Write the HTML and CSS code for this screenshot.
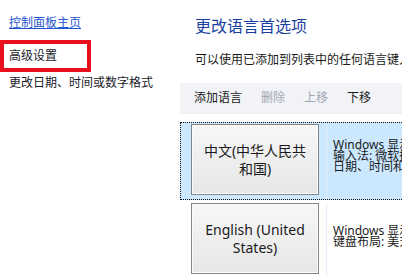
FILE: index.html
```html
<!DOCTYPE html>
<html lang="zh-CN">
<head>
<meta charset="utf-8">
<title>语言</title>
<link rel="stylesheet" href="styles.css">
</head>
<body>
<div class="page">
  <aside class="sidebar">
    <a class="home-link" href="#">控制面板主页</a>
    <div class="nav-item highlighted">高级设置</div>
    <div class="nav-item plain">更改日期、时间或数字格式</div>
  </aside>
  <main class="content">
    <h1 class="title">更改语言首选项</h1>
    <p class="subtitle">可以使用已添加到列表中的任何语言键入。列表顶部的语言为你的主要语言。</p>
    <div class="toolbar">
      <span class="tool">添加语言</span>
      <span class="tool disabled">删除</span>
      <span class="tool disabled">上移</span>
      <span class="tool">下移</span>
    </div>
    <div class="lang-list">
      <div class="lang-item selected">
        <div class="lang-btn-col"><div class="lang-btn">中文(中华人民共和国)</div></div>
        <div class="lang-desc desc-three">
          <div>Windows 显示语言: 已启用</div>
          <div>输入法: 微软拼音</div>
          <div>日期、时间和数字格式</div>
        </div>
      </div>
      <div class="lang-item">
        <div class="lang-btn-col"><div class="lang-btn">English (United States)</div></div>
        <div class="lang-desc desc-two">
          <div>Windows 显示语言: 可用</div>
          <div>键盘布局: 美式键盘</div>
        </div>
      </div>
    </div>
  </main>
</div>
</body>
</html>
```
FILE: styles.css
```css
html, body {
  margin: 0;
  padding: 0;
  background: #ffffff;
}
body {
  font-family: "Noto Sans", "Noto Sans CJK SC", sans-serif;
  color: #1a1a1a;
  width: 402px;
  height: 277px;
  overflow: hidden;
}
.page {
  display: grid;
  grid-template-columns: 180px 222px;
  height: 277px;
}
.sidebar {
  display: flex;
  flex-direction: column;
  align-items: flex-start;
  padding-top: 15px;
}
.home-link {
  margin-left: 9px;
  font-size: 12px;
  line-height: 16px;
  color: #1f55d0;
  text-decoration: underline;
}
.nav-item {
  font-size: 12px;
  line-height: 16px;
  color: #1a1a2a;
  white-space: nowrap;
}
.highlighted {
  margin-top: 9px;
  width: 91px;
  box-sizing: border-box;
  border: 4px solid #e8101c;
  padding: 4px 0 4px 5px;
}
.plain {
  margin-top: 3px;
  margin-left: 9px;
}
.content {
  padding-top: 16px;
  overflow: hidden;
  white-space: nowrap;
}
.title {
  margin: 0 0 0 15px;
  font-size: 16px;
  line-height: 20px;
  font-weight: normal;
  color: #1b3f9f;
}
.subtitle {
  margin: 16px 0 0 15px;
  font-size: 12px;
  line-height: 16px;
}
.toolbar {
  margin-top: 15px;
  height: 30px;
  background: #f1f3f6;
  border-bottom: 1px solid #e9ecf0;
  display: flex;
  align-items: center;
  gap: 19px;
  padding-left: 14px;
}
.tool {
  font-size: 12px;
  line-height: 16px;
  color: #1a1a1a;
}
.tool.disabled {
  color: #a3a6b4;
}
.lang-list {
  margin-top: 8px;
}
.lang-item {
  display: flex;
  padding: 3px 0 0 11px;
  height: 77px;
  box-sizing: border-box;
}
.lang-item.selected {
  background: #cce8ff;
  border: 1px dotted #111;
  border-right: none;
  padding: 1px 0 0 10px;
  height: 78px;
}
.lang-btn-col {
  width: 135px;
  border-right: 1px solid #e3effb;
  flex: none;
}
.lang-btn {
  width: 128px;
  height: 71px;
  box-sizing: border-box;
  border: 1px solid #858585;
  box-shadow: inset 0 0 0 1px #fbfbfb;
  background: linear-gradient(#f7f7f7, #e6e6e6);
  display: flex;
  align-items: center;
  justify-content: center;
  text-align: center;
  white-space: normal;
  padding: 0 8px;
  font-size: 14px;
  line-height: 18px;
  color: #1a1a1a;
}
.lang-desc {
  padding-left: 6px;
  font-size: 12px;
  line-height: 11px;
  color: #1a1a1a;
  white-space: nowrap;
}
.desc-three {
  padding-top: 15px;
}
.desc-two {
  padding-top: 22px;
}
```
